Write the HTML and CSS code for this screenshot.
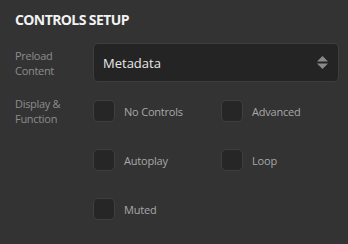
FILE: index.html
```html
<!DOCTYPE html>
<html lang="en">
<head>
    <meta charset="UTF-8">
    <meta name="viewport" content="width=device-width, initial-scale=1.0">
    <title>Controls Setup</title>
    <link rel="stylesheet" href="styles.css">
</head>
<body>
    <div class="panel">
        <h2 class="panel-title">CONTROLS SETUP</h2>

        <div class="field">
            <div class="field-label">Preload<br>Content</div>
            <div class="select-box">
                <span>Metadata</span>
                <svg class="select-arrows" width="11" height="13" viewBox="0 0 11 13">
                    <polygon points="5.5,0 11,5.5 0,5.5" fill="#8a8a8a"/>
                    <polygon points="0,7.5 11,7.5 5.5,13" fill="#8a8a8a"/>
                </svg>
            </div>
        </div>

        <div class="field field-top">
            <div class="field-label shift">Display &amp;<br>Function</div>
            <div class="check-grid">
                <label class="check"><span class="box"></span>No Controls</label>
                <label class="check"><span class="box"></span>Advanced</label>
                <label class="check"><span class="box"></span>Autoplay</label>
                <label class="check"><span class="box"></span>Loop</label>
                <label class="check"><span class="box"></span>Muted</label>
            </div>
        </div>
    </div>
</body>
</html>
```

FILE: styles.css
```css
body {
    margin: 0;
    padding: 0;
    background-color: #333333;
    font-family: "Open Sans", Arial, sans-serif;
}

.panel {
    padding: 10px 9px 0 15px;
}

.panel-title {
    margin: 0 0 13px 0;
    font-size: 14px;
    line-height: 20px;
    font-weight: 700;
    color: #f2f2f2;
    letter-spacing: -0.6px;
}

.field {
    display: grid;
    grid-template-columns: 78px 1fr;
    align-items: center;
}

.field-top {
    align-items: start;
    margin-top: 18px;
}

.field-label {
    font-size: 11px;
    line-height: 15px;
    color: #8c8c8c;
    letter-spacing: -0.3px;
}

.field-label.shift {
    margin-top: -4px;
}

.select-box {
    height: 37px;
    display: flex;
    align-items: center;
    justify-content: space-between;
    padding: 0 10px 0 9px;
    background-color: #242424;
    border: 1px solid #3e3e3e;
    border-radius: 5px;
    font-size: 13px;
    color: #e8e8e8;
}

.select-arrows {
    display: block;
}

.check-grid {
    display: grid;
    grid-template-columns: 128px 1fr;
    row-gap: 27px;
}

.check {
    display: flex;
    align-items: center;
    font-size: 11px;
    color: #a8a8a8;
    letter-spacing: -0.2px;
}

.box {
    width: 20px;
    height: 20px;
    margin-right: 9px;
    background-color: #262626;
    border: 1px solid #3f3f3f;
    border-radius: 5px;
}
```
